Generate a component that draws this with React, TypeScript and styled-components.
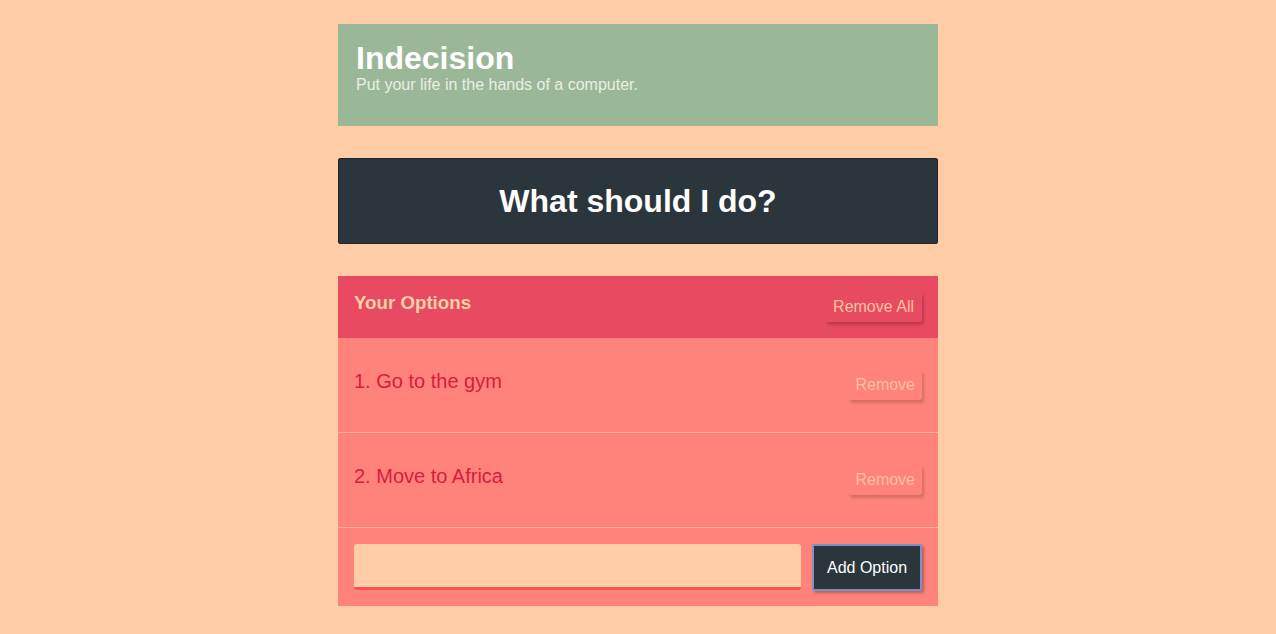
import React, { useState } from 'react';
import styled, { createGlobalStyle } from 'styled-components';

const GlobalStyle = createGlobalStyle`
	* {
		box-sizing: border-box;
	}
	body {
		margin: 0;
		background: #fecca5;
		font-family: "Liberation Sans", Arial, sans-serif;
	}
`

const Container = styled.div`
	width: 600px;
	margin: 0 auto;
	padding-top: 24px;
`

const Header = styled.header`
	background: #9ab898;
	padding: 16px 18px 32px;
	margin-bottom: 32px;
`

const Title = styled.h1`
	margin: 0;
	color: #fff;
	font-size: 32px;
	line-height: 36px;
	font-weight: bold;
`

const Subtitle = styled.h2`
	margin: 0;
	color: #e9efe3;
	font-size: 16px;
	font-weight: normal;
	line-height: 18px;
`

const BigButton = styled.button`
	display: block;
	width: 100%;
	height: 86px;
	background: #2b353c;
	border: 1px solid #1f272d;
	border-radius: 2px;
	color: #fff;
	font-family: inherit;
	font-size: 32px;
	font-weight: bold;
	margin-bottom: 32px;
	cursor: pointer;
`

const Widget = styled.div`
	background: #ff837a;
`

const WidgetHeader = styled.div`
	background: #e84b61;
	height: 62px;
	display: flex;
	justify-content: space-between;
	align-items: flex-start;
	padding: 16px 16px 0;
`

const WidgetTitle = styled.h3`
	margin: 1px 0 0;
	color: #fdd0a6;
	font-size: 18.72px;
	font-weight: bold;
	line-height: 20px;
`

const LinkButton = styled.button<{ bg: string; shadow: string; pad: number }>`
	background: ${props => props.bg};
	border: none;
	border-radius: 3px;
	color: #fdc2a0;
	font-family: inherit;
	font-size: 16px;
	height: 30px;
	padding: 0 ${props => props.pad}px;
	box-shadow: 2px 3px 3px ${props => props.shadow};
	cursor: pointer;
`

const OptionRow = styled.div`
	height: 95px;
	display: flex;
	justify-content: space-between;
	align-items: flex-start;
	padding: 32px 16px 0;
	border-bottom: 1px solid #ffb0a6;
`

const OptionText = styled.p`
	margin: -1px 0 0;
	color: #d71c3f;
	font-size: 20px;
	line-height: 24px;
`

const AddForm = styled.form`
	display: flex;
	gap: 12px;
	padding: 16px 16px 16px;
	height: 78px;
`

const Input = styled.input`
	flex: 1;
	height: 46px;
	background: #fecca5;
	border: none;
	border-bottom: 3px solid #f4524a;
	border-radius: 3px;
	font-family: inherit;
	font-size: 16px;
	outline: none;
	padding: 0 12px;
`

const AddButton = styled.button`
	width: 110px;
	height: 47px;
	margin-left: -1px;
	background: #2b353c;
	border: 2px solid #7f90c8;
	border-radius: 2px;
	color: #fff;
	font-family: inherit;
	font-size: 16px;
	box-shadow: 2px 2px 3px rgba(120, 60, 60, 0.5);
	cursor: pointer;
`

export default function App() {
	const [options] = useState(['Go to the gym', 'Move to Africa']);
	return (
		<>
			<GlobalStyle />
			<Container>
				<Header>
					<Title>Indecision</Title>
					<Subtitle>Put your life in the hands of a computer.</Subtitle>
				</Header>
				<BigButton>What should I do?</BigButton>
				<Widget>
					<WidgetHeader>
						<WidgetTitle>Your Options</WidgetTitle>
						<LinkButton bg="#e84b61" shadow="#bf3a4e" pad={8}>Remove All</LinkButton>
					</WidgetHeader>
					{options.map((option, index) => (
						<OptionRow key={option}>
							<OptionText>{`${index + 1}. ${option}`}</OptionText>
							<LinkButton bg="#ff837a" shadow="#d86c64" pad={7}>Remove</LinkButton>
						</OptionRow>
					))}
					<AddForm onSubmit={e => e.preventDefault()}>
						<Input type="text" name="option" />
						<AddButton>Add Option</AddButton>
					</AddForm>
				</Widget>
			</Container>
		</>
	)
}
